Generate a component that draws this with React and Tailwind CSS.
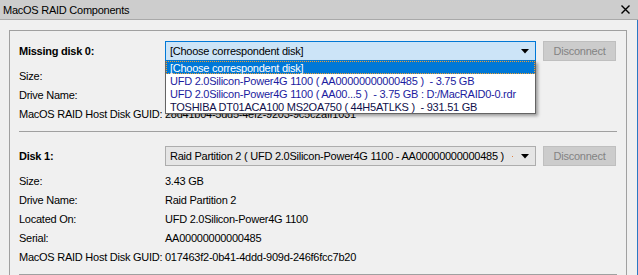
import React from "react";

const Arrow = () => (
  <svg width="8" height="5" viewBox="0 0 8 5" className="block">
    <path d="M0 0H8L4 4.5Z" fill="#000" />
  </svg>
);

const Row = ({ label, value }) => (
  <div className="flex h-[19px] items-center">
    <div className="w-[146px] shrink-0 whitespace-nowrap">{label}</div>
    <div className="whitespace-nowrap">{value}</div>
  </div>
);

const Disconnect = () => (
  <div className="ml-[7px] flex h-[20px] w-[73px] items-center justify-center border border-[#bfbfbf] bg-[#cccccc] text-[#838383]">
    Disconnect
  </div>
);

export default function App() {
  return (
    <div
      className="relative h-[275px] w-[638px] overflow-hidden bg-[#f0f0f0] text-[11px] leading-[14px] tracking-[-0.25px] text-black"
      style={{ fontFamily: "'Liberation Sans', Arial, sans-serif" }}
    >
      <div className="flex h-[20px] items-center justify-between border-b border-[#a9a9a9] bg-[#cdcdcd] pl-[3px] pr-[8px]">
        <span>MacOS RAID Components</span>
        <svg width="9" height="9" viewBox="0 0 9 9" className="block">
          <path d="M0.5 0.5L8.5 8.5M8.5 0.5L0.5 8.5" stroke="#000" strokeWidth="1.4" />
        </svg>
      </div>
      <div className="flex border-r border-[#2b79c4] pl-[9px] pr-[10px] pt-[10px]">
        <div className="h-[300px] w-[618px] border-l border-r border-t border-[#a0a0a0] pl-[9px] pr-[9px] pt-[10px]">
          {/* Section 1 */}
          <div className="flex h-[20px] items-center">
            <div className="w-[146px] shrink-0 font-bold">Missing disk 0:</div>
            <div className="relative h-[20px] w-[371px] shrink-0">
              <div className="flex h-full items-center justify-between border border-[#0078d7] bg-[#cce4f7] pl-[4px] pr-[6px]">
                <span>[Choose correspondent disk]</span>
                <Arrow />
              </div>
              <div className="absolute left-0 top-[20px] z-10 w-full border-x border-b border-[#646464] bg-white shadow-[2px_2px_3px_rgba(0,0,0,0.35)]">
                <div className="flex h-[13px] items-center border border-dotted border-[#f0a030] bg-[#0078d7] pl-[3px] text-white">
                  [Choose correspondent disk]
                </div>
                <div className="flex h-[13px] items-center whitespace-pre pl-[4px] text-[#1c1ca0]">
                  {"UFD 2.0Silicon-Power4G 1100 ( AA00000000000485 )  - 3.75 GB"}
                </div>
                <div className="flex h-[13px] items-center whitespace-pre pl-[4px] text-[#1c1ca0]">
                  {"UFD 2.0Silicon-Power4G 1100 ( AA00...5 )  - 3.75 GB : D:/MacRAID0-0.rdr"}
                </div>
                <div className="flex h-[13px] items-center whitespace-pre pl-[4px] text-[#10104a]">
                  {"TOSHIBA DT01ACA100 MS2OA750 ( 44H5ATLKS )  - 931.51 GB"}
                </div>
              </div>
            </div>
            <Disconnect />
          </div>
          <div className="mt-[5px]">
            <Row label="Size:" value="" />
            <Row label="Drive Name:" value="" />
            <Row label="MacOS RAID Host Disk GUID:" value="28d41b04-5dd5-4ef2-9203-9c5c2aff1031" />
          </div>
          <div className="mt-[8px] h-px w-[598px] bg-[#a0a0a0]" />

          {/* Section 2 */}
          <div className="mt-[14px] flex h-[20px] items-center">
            <div className="w-[146px] shrink-0 font-bold">Disk 1:</div>
            <div className="flex h-[20px] w-[371px] shrink-0 items-center justify-between overflow-hidden border border-[#adadad] bg-[#e5e5e5] pl-[4px] pr-[6px]">
              <span className="overflow-hidden whitespace-pre">Raid Partition 2 ( UFD 2.0Silicon-Power4G 1100 - AA00000000000485 )</span>
              <span className="flex shrink-0 items-center gap-[8px] pl-[4px]">
                <span className="h-px w-px bg-[#e08040]" />
                <Arrow />
              </span>
            </div>
            <Disconnect />
          </div>
          <div className="mt-[5px]">
            <Row label="Size:" value="3.43 GB" />
            <Row label="Drive Name:" value="Raid Partition 2" />
            <Row label="Located On:" value="UFD 2.0Silicon-Power4G 1100" />
            <Row label="Serial:" value="AA00000000000485" />
            <Row label="MacOS RAID Host Disk GUID:" value="017463f2-0b41-4ddd-909d-246f6fcc7b20" />
          </div>
          <div className="mt-[8px] h-px w-[598px] bg-[#a0a0a0]" />
        </div>
      </div>
    </div>
  );
}
